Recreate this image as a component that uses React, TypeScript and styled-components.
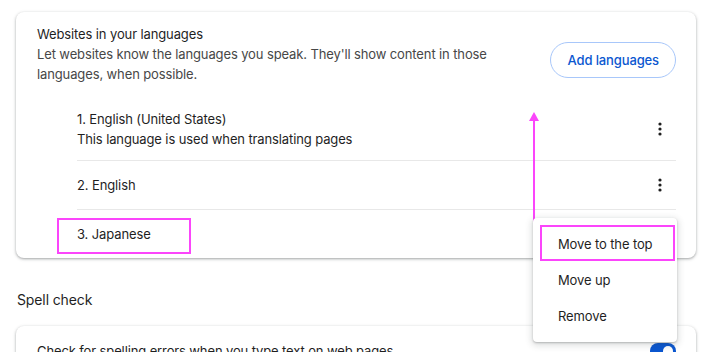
import React from "react";
import styled, { createGlobalStyle } from "styled-components";

const GlobalStyle = createGlobalStyle`
  html, body {
    margin: 0;
    padding: 0;
    background: #fff;
  }
  body {
    font-family: Inter, "Noto Sans", "Liberation Sans", sans-serif;
    color: #1f1f1f;
    letter-spacing: -0.12px;
    -webkit-font-smoothing: antialiased;
  }
`

const Page = styled.div`
  position: relative;
  width: 710px;
  height: 352px;
  overflow: hidden;
  padding: 12px 14px 0 16px;
  box-sizing: border-box;
`

const Card = styled.div`
  background: #fff;
  border-radius: 8px;
  box-shadow: 0 1px 2px 0 rgba(60, 64, 67, 0.3), 0 1px 3px 1px rgba(60, 64, 67, 0.15);
  padding: 12px 20px 0 21px;
`

const SpellCard = styled(Card)`
  padding: 0 20px 0 21px;
`

const Header = styled.div`
  display: flex;
  justify-content: space-between;
  align-items: flex-start;
`

const Title = styled.div`
  font-size: 13px;
  line-height: 20px;
  color: #1f1f1f;
`

const Description = styled.div`
  font-size: 13px;
  line-height: 20px;
  color: #474747;
  max-width: 470px;
`

const OutlineButton = styled.button`
  margin-top: 18px;
  height: 36px;
  padding: 0 16px;
  border: 1px solid #a8c7fa;
  border-radius: 18px;
  background: #fff;
  color: #0b57d0;
  font-family: inherit;
  font-size: 13px;
  font-weight: 500;
  letter-spacing: -0.12px;
  cursor: pointer;
`

const List = styled.div`
  margin: 14px 0 0 40px;
`

const Row = styled.div<{ $first?: boolean; $tall?: boolean }>`
  display: flex;
  align-items: center;
  justify-content: space-between;
  min-height: ${p => (p.$tall ? "0" : "48px")};
  padding: ${p => (p.$tall ? "11px 0" : "0")};
  border-top: ${p => (p.$first ? "none" : "1px solid #e8e8e8")};
`

const RowText = styled.div`
  font-size: 13px;
  line-height: 20px;
  color: #1f1f1f;
`

const KebabButton = styled.span`
  display: flex;
  width: 20px;
  height: 20px;
  margin-right: 6px;
`

const SectionHeading = styled.h2`
  margin: 32px 0 16px 1px;
  font-size: 14px;
  font-weight: 400;
  line-height: 20px;
  color: #1f1f1f;
`

const ToggleRow = styled.div`
  display: flex;
  align-items: center;
  justify-content: space-between;
  min-height: 50px;
`

const Toggle = styled.span<{ $on?: boolean }>`
  position: relative;
  width: 26px;
  height: 16px;
  border-radius: 8px;
  background: ${p => (p.$on ? "#0b57d0" : "#747775")};

  &::after {
    content: "";
    position: absolute;
    top: 3px;
    left: ${p => (p.$on ? "13px" : "3px")};
    width: 10px;
    height: 10px;
    border-radius: 50%;
    background: #fff;
  }
`

const Menu = styled.div`
  position: absolute;
  left: 533px;
  top: 218px;
  width: 144px;
  padding: 8px 0;
  background: #fff;
  border-radius: 4px;
  box-shadow: 0 1px 2px 0 rgba(60, 64, 67, 0.3), 0 2px 6px 2px rgba(60, 64, 67, 0.15);
`

const MenuItem = styled.div`
  height: 36px;
  display: flex;
  align-items: center;
  padding-left: 25px;
  font-size: 13px;
  color: #1f1f1f;
`

const Highlight = styled.div<{ $x: number; $y: number; $w: number; $h: number }>`
  position: absolute;
  left: ${p => p.$x}px;
  top: ${p => p.$y}px;
  width: ${p => p.$w}px;
  height: ${p => p.$h}px;
  border: 2px solid #fb45fb;
  box-sizing: border-box;
  pointer-events: none;
`

const ArrowSvg = styled.svg`
  position: absolute;
  left: 527px;
  top: 110px;
  pointer-events: none;
`

const Kebab = () => (
  <KebabButton>
    <svg width="20" height="20" viewBox="0 0 20 20">
      <circle cx="10" cy="5" r="1.6" fill="#1f1f1f" />
      <circle cx="10" cy="10" r="1.6" fill="#1f1f1f" />
      <circle cx="10" cy="15" r="1.6" fill="#1f1f1f" />
    </svg>
  </KebabButton>
)

const App = () => {
  return (
    <Page>
      <GlobalStyle />
      <Card>
        <Header>
          <div>
            <Title>Websites in your languages</Title>
            <Description>
              Let websites know the languages you speak. They'll show content in those languages, when possible.
            </Description>
          </div>
          <OutlineButton>Add languages</OutlineButton>
        </Header>
        <List>
          <Row $first $tall>
            <div>
              <RowText>1. English (United States)</RowText>
              <RowText>This language is used when translating pages</RowText>
            </div>
            <Kebab />
          </Row>
          <Row>
            <RowText>2. English</RowText>
            <Kebab />
          </Row>
          <Row>
            <RowText>3. Japanese</RowText>
          </Row>
        </List>
      </Card>

      <SectionHeading>Spell check</SectionHeading>
      <SpellCard>
        <ToggleRow>
          <RowText>Check for spelling errors when you type text on web pages</RowText>
          <Toggle $on />
        </ToggleRow>
      </SpellCard>

      <ArrowSvg width="14" height="146" viewBox="0 0 14 146">
        <polygon points="7,2 2,11 12,11" fill="#fb45fb" />
        <rect x="6" y="10" width="2" height="133" fill="#fb45fb" />
      </ArrowSvg>

      <Menu>
        <MenuItem>Move to the top</MenuItem>
        <MenuItem>Move up</MenuItem>
        <MenuItem>Remove</MenuItem>
      </Menu>

      <Highlight $x={57} $y={218} $w={134} $h={36} />
      <Highlight $x={540} $y={225} $w={135} $h={36} />
    </Page>
  );
};

export default App;
